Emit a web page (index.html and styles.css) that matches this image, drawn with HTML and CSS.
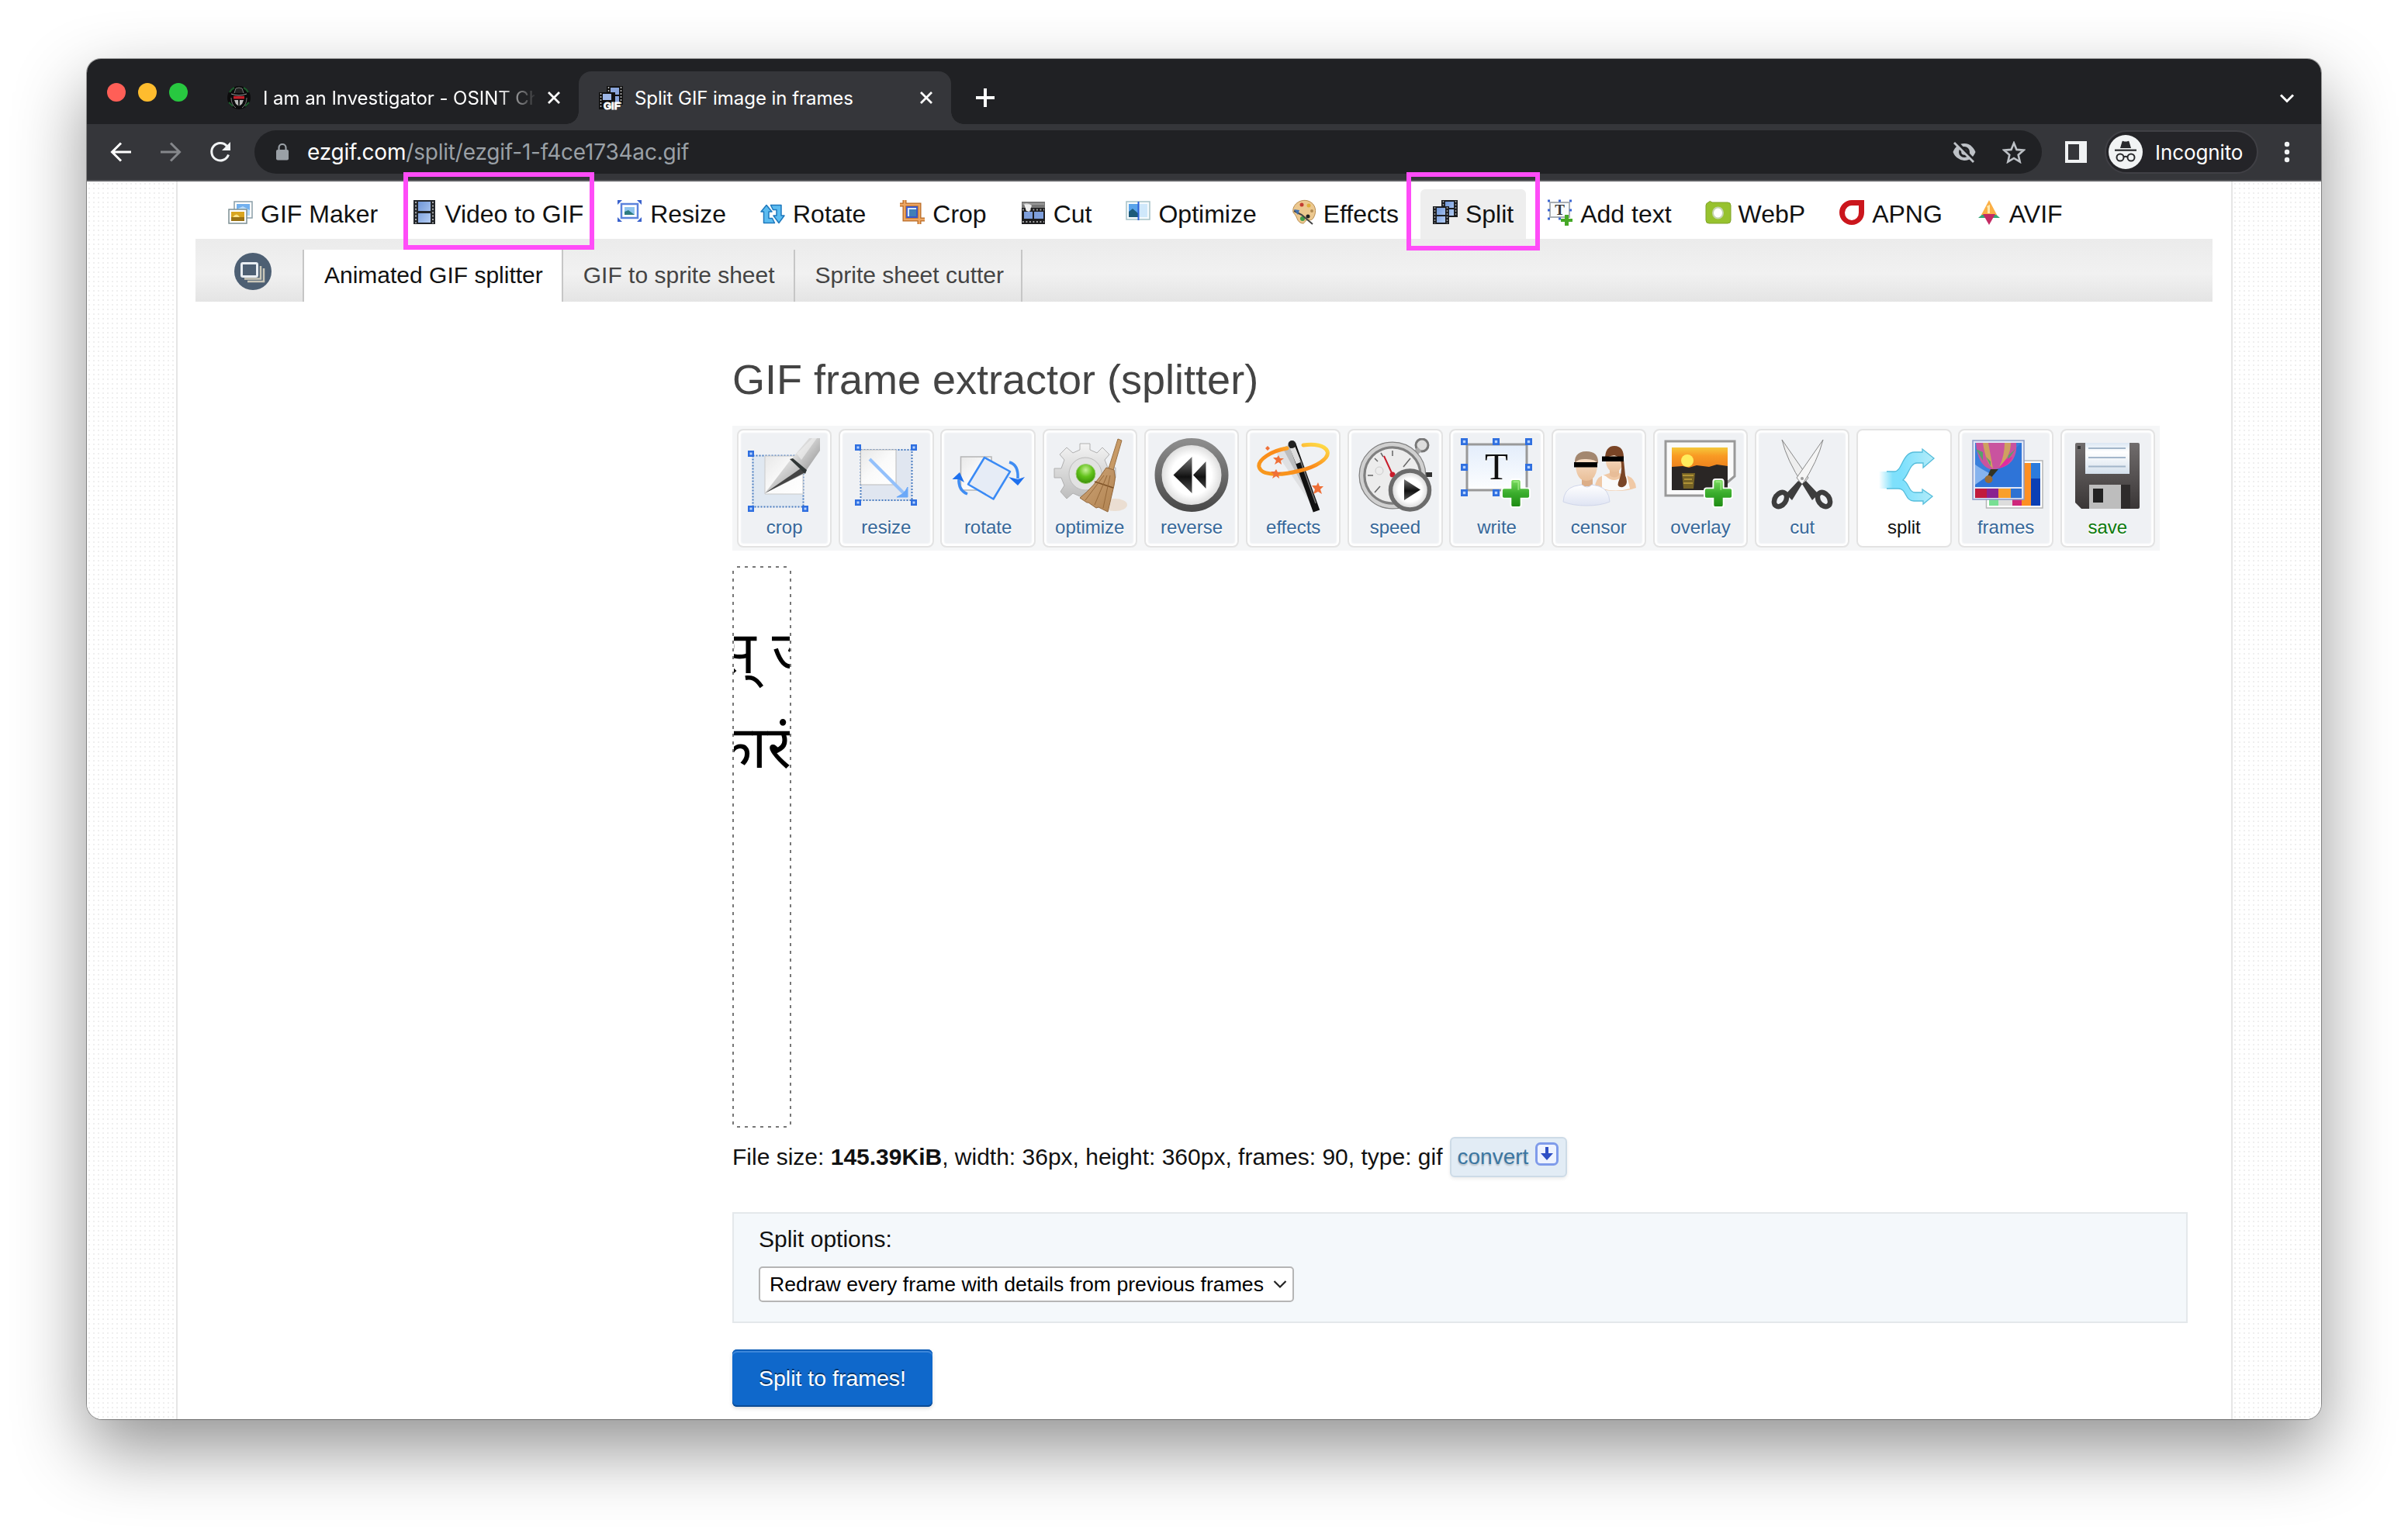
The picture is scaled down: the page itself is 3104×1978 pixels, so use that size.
FILE: index.html
```html
<!DOCTYPE html>
<html lang="en">
<head>
<meta charset="utf-8">
<title>Split GIF image in frames</title>
<link rel="stylesheet" href="styles.css">
</head>
<body>
<svg class="defs" width="0" height="0" aria-hidden="true">
  <defs>
    <linearGradient id="steel" x1="0" y1="0" x2="1" y2="1"><stop offset="0" stop-color="#fff"/><stop offset="1" stop-color="#8f8f8f"/></linearGradient>
    <linearGradient id="paper" x1="0" y1="0" x2="1" y2="1"><stop offset="0" stop-color="#e8e8e8"/><stop offset=".5" stop-color="#fafafa"/><stop offset="1" stop-color="#fff"/></linearGradient>
    <linearGradient id="gear" x1="0" y1="0" x2="0" y2="1"><stop offset="0" stop-color="#f4f4f4"/><stop offset="1" stop-color="#bdbdbd"/></linearGradient>
    <linearGradient id="straw" x1="0" y1="0" x2="1" y2="1"><stop offset="0" stop-color="#cfa67a"/><stop offset="1" stop-color="#b0824f"/></linearGradient>
    <radialGradient id="ball" cx=".5" cy=".3" r=".7"><stop offset="0" stop-color="#c8f29a"/><stop offset=".5" stop-color="#62c21a"/><stop offset="1" stop-color="#3a8f08"/></radialGradient>
    <linearGradient id="ring" x1="0" y1="0" x2="0" y2="1"><stop offset="0" stop-color="#8c8c8c"/><stop offset="1" stop-color="#4a4a4a"/></linearGradient>
    <radialGradient id="dial" cx=".5" cy=".5" r=".5"><stop offset=".6" stop-color="#fff"/><stop offset="1" stop-color="#d2d2d2"/></radialGradient>
    <linearGradient id="ink" x1="0" y1="0" x2="0" y2="1"><stop offset="0" stop-color="#777"/><stop offset=".55" stop-color="#111"/><stop offset="1" stop-color="#555"/></linearGradient>
    <linearGradient id="flame" x1="0" y1="1" x2="1" y2="0"><stop offset="0" stop-color="#f79a1e"/><stop offset=".5" stop-color="#fb8a1a"/><stop offset="1" stop-color="#ffe14a"/></linearGradient>
    <linearGradient id="plus" x1="0" y1="0" x2="0" y2="1"><stop offset="0" stop-color="#7ede62"/><stop offset=".5" stop-color="#3aad2c"/><stop offset="1" stop-color="#1d8a12"/></linearGradient>
    <linearGradient id="sky" x1="0" y1="0" x2="0" y2="1"><stop offset="0" stop-color="#e3edfb"/><stop offset="1" stop-color="#fdfeff"/></linearGradient>
    <linearGradient id="sunset" x1="0" y1="0" x2="0" y2="1"><stop offset="0" stop-color="#f5c83a"/><stop offset=".35" stop-color="#f99a24"/><stop offset="1" stop-color="#e8791b"/></linearGradient>
    <linearGradient id="cyan" x1="0" y1="0" x2="1" y2="0"><stop offset="0" stop-color="#7fe0fb" stop-opacity="0"/><stop offset=".25" stop-color="#7fe0fb"/><stop offset=".4" stop-color="#7ce0fd"/><stop offset="1" stop-color="#b4ecf9"/></linearGradient>
    <linearGradient id="disk" x1="0" y1="0" x2="0" y2="1"><stop offset="0" stop-color="#716d6d"/><stop offset="1" stop-color="#3a3636"/></linearGradient>
    <linearGradient id="label" x1="0" y1="0" x2="0" y2="1"><stop offset="0" stop-color="#dbe7f3"/><stop offset=".3" stop-color="#fff"/><stop offset="1" stop-color="#d4e0ec"/></linearGradient>
    <linearGradient id="skin" x1="0" y1="0" x2="0" y2="1"><stop offset="0" stop-color="#fbe6d2"/><stop offset="1" stop-color="#e9bf99"/></linearGradient>
    <linearGradient id="shirt" x1="0" y1="0" x2="0" y2="1"><stop offset="0" stop-color="#fff"/><stop offset="1" stop-color="#dfe4f3"/></linearGradient>
    <linearGradient id="film" x1="0" y1="0" x2="1" y2="1"><stop offset="0" stop-color="#6f96d8"/><stop offset="1" stop-color="#b4cdf4"/></linearGradient>
    <symbol id="handle" viewBox="0 0 8 8"><path d="M0 0h8v8H0z" fill="#2f6fe0"/><path d="M2.500 2.500h3v3h-3z" fill="#b8d4ff"/></symbol>
    <symbol id="add" viewBox="0 0 40 40"><path d="M13 4q0-3 3-3h8q3 0 3 3v9h9q3 0 3 3v8q0 3-3 3h-9v9q0 3-3 3h-8q-3 0-3-3v-9H4q-3 0-3-3v-8q0-3 3-3h9z" fill="url(#plus)" stroke="#fff" stroke-width="2"/><path d="M16.500 4.500h7v11" fill="none" stroke="#a8f08e" stroke-width="2" opacity=".7"/></symbol>
  </defs>
</svg>

<main class="window">
  <header class="tabstrip">
    <div class="lights"><i class="light red"></i><i class="light amber"></i><i class="light green"></i></div>
    <div class="tab">
      <svg class="fav" viewBox="0 0 32 32"><circle cx="16" cy="16" r="15" fill="#0b0b0c"/><path d="M4 9a14 14 0 0 1 6-6M28 9a14 14 0 0 0-6-6M3 22l5 5M29 22l-5 5" stroke="#1c5c2c" stroke-width="2" fill="none"/><path d="M10 10l2-6q4-2 8 0l2 6" fill="#222" stroke="#777"/><path d="M6 11q10 4 20 0" stroke="#999" fill="none"/><path d="M9 14h14v3.500H9z" fill="#c01f2a"/><path d="M10 19h5l1 8-4-3zM22 19h-5l-1 8 4-3z" fill="#bbb"/><path d="M16 19v9" stroke="#111" stroke-width="1.500"/><path d="M6 16q0 9 6 13M26 16q0 9-6 13" stroke="#777" fill="none"/></svg>
      <span class="tab-title fade">I am an Investigator - OSINT Challenge</span>
      <svg class="close" viewBox="0 0 18 18"><path d="M2 2l14 14M16 2L2 16" stroke="#fff" stroke-width="2.800"/></svg>
    </div>
    <div class="tab active">
      <svg class="fav" viewBox="0 0 32 32"><path d="M10 1h21v24H10z" fill="#111"/><path d="M15 3h11v9H15zM15 14h11v9H15z" fill="#8aa5da"/><path d="M12.500 2v22M28.500 2v22" stroke="#bbb" stroke-width="1.500" stroke-dasharray="2 2"/><path d="M0 9h21v22H0z" fill="#111"/><path d="M5 11h11v8H5z" fill="#9db6e6"/><path d="M2.500 10v20" stroke="#bbb" stroke-width="1.500" stroke-dasharray="2 2"/><text x="6" y="30.500" font-family="Liberation Sans" font-weight="700" font-size="13" fill="#fff" stroke="#fff">GIF</text></svg>
      <span class="tab-title">Split GIF image in frames</span>
      <svg class="close" viewBox="0 0 18 18"><path d="M2 2l14 14M16 2L2 16" stroke="#fff" stroke-width="2.800"/></svg>
    </div>
    <svg class="newtab" viewBox="0 0 24 24"><path d="M12 0v24M0 12h24" stroke="#fff" stroke-width="4"/></svg>
    <svg class="chevron" viewBox="0 0 18 12"><path d="M1 1.500l8 8 8-8" fill="none" stroke="#fff" stroke-width="3"/></svg>
  </header>

  <nav class="toolbar">
    <svg class="tb back" viewBox="0 0 28 28"><path d="M27 14H3M14 2.500L2.500 14 14 25.500" fill="none" stroke="#fff" stroke-width="3"/></svg>
    <svg class="tb fwd" viewBox="0 0 28 28"><path d="M1 14h24M14 2.500L25.500 14 14 25.500" fill="none" stroke="#85878b" stroke-width="3"/></svg>
    <svg class="tb reload" viewBox="0 0 28 28"><path d="M24.500 17.500A11.200 11.200 0 1 1 22.500 6.500" fill="none" stroke="#f1f3f4" stroke-width="3"/><path d="M27 1v11H16z" fill="#f1f3f4"/></svg>
    <div class="omnibox">
      <svg class="lock" viewBox="0 0 18 22"><rect x="1" y="8" width="16" height="13.500" rx="2" fill="#9aa0a6"/><path d="M4.500 9V5.500a4.500 4.500 0 0 1 9 0V9" fill="none" stroke="#9aa0a6" stroke-width="2.200"/></svg>
      <span class="url"><b>ezgif.com</b>/split/ezgif-1-f4ce1734ac.gif</span>
      <svg class="eye" viewBox="0 0 32 28"><path d="M16 3C9 3 4 7.500 1.500 14c1.200 3 3 5.500 5.500 7.500A16 16 0 0 0 16 25c7 0 12-4.500 14.500-11C28 7.500 23 3 16 3z" fill="#bdc1c6"/><circle cx="16" cy="14" r="7" fill="#202124"/><circle cx="16" cy="14" r="3.800" fill="#bdc1c6"/><path d="M5 0l24 25" stroke="#202124" stroke-width="4"/><path d="M3 2l25 25" stroke="#bdc1c6" stroke-width="2.800"/></svg>
      <svg class="star" viewBox="0 0 30 29"><path d="M15 2.500l3.500 8.400 9 .8-6.800 6 2 8.900L15 21.900l-7.700 4.700 2-8.900-6.800-6 9-.8z" fill="none" stroke="#bdc1c6" stroke-width="2.600"/></svg>
    </div>
    <svg class="panel" viewBox="0 0 28 28"><path d="M0 0h28v28H0zM4 4v20h14V4z" fill="#f1f3f4" fill-rule="evenodd"/></svg>
    <div class="profile">
      <svg viewBox="0 0 44 44"><circle cx="22" cy="22" r="22" fill="#f1f3f4"/><path d="M15 17l2.500-8.500q.5-1 1.500-.5 3 1 6 0 1-.5 1.500.5L29 17z" fill="#28292c"/><path d="M8 19.700h28" stroke="#28292c" stroke-width="2.200"/><circle cx="15" cy="29" r="4.500" fill="none" stroke="#28292c" stroke-width="2"/><circle cx="29" cy="29" r="4.500" fill="none" stroke="#28292c" stroke-width="2"/><path d="M19.500 28.500q2.500-1.500 5 0" fill="none" stroke="#28292c" stroke-width="2"/></svg>
      <span>Incognito</span>
    </div>
    <svg class="kebab" viewBox="0 0 8 28"><circle cx="4" cy="4" r="3.200" fill="#f1f3f4"/><circle cx="4" cy="14" r="3.200" fill="#f1f3f4"/><circle cx="4" cy="24" r="3.200" fill="#f1f3f4"/></svg>
  </nav>

  <div class="page">
    <div class="container">
      <nav class="menu">
        <a><svg viewBox="0 0 32 32"><path d="M8 2h23v21H8z" fill="#fff" stroke="#8a9fa8" stroke-width="1.500"/><path d="M11 5h17v15H11z" fill="#72b0ee"/><path d="M11 12l8-4 9 5v7H11z" fill="#b8dcfa"/><path d="M1 12h23v18H1z" fill="#fff" stroke="#7c8f92" stroke-width="1.500"/><path d="M4 15h17v12H4z" fill="#d9a520"/><path d="M4 22h17v5H4z" fill="#9a7216"/><path d="M6 22q5-7 9 0z" fill="#fbe48a"/></svg>GIF Maker</a>
        <a><svg viewBox="0 0 32 32"><path d="M2 0h28v31H2z" fill="#23262b"/><path d="M8 2h16v12H8zM8 17h16v12H8z" fill="url(#film)"/><path d="M5 2v28M27 2v28" stroke="#a8a8a8" stroke-width="2" stroke-dasharray="2 2.400"/></svg>Video to GIF</a>
        <a><svg viewBox="0 0 32 32"><path d="M5 5h21v18H5z" fill="#fff" stroke="#5b82dc" stroke-width="2.500"/><path d="M9 9h13v10H9z" fill="#8fc4ee"/><path d="M9 15l5-2 8 6H9z" fill="#2d7b80"/><path d="M0 0h6L0 6zM31 0h-6l6 6zM0 28h6l-6-6zM31 28h-6l6-6z" fill="#3a62cc"/></svg>Resize</a>
        <a><svg viewBox="0 0 32 32"><path d="M4.500 29.500V15H1l7-8.500L15 15h-4v8.500h4.500l3 6z" fill="#5cbcf0" stroke="#1d78bd" stroke-width="1.500" stroke-linejoin="round"/><path d="M13.500 6.500H27V20h4l-7 9.500L17 20h4v-7.500h-4.500z" fill="#5cbcf0" stroke="#1d78bd" stroke-width="1.500" stroke-linejoin="round"/></svg>Rotate</a>
        <a><svg viewBox="0 0 32 32"><path d="M9 9h15v15H9z" fill="#d8e8fc"/><path d="M12 12h11v9H12z" fill="#3f7fb8"/><path d="M6 0v25h26M0 6h25v25" fill="none" stroke="#b86a24" stroke-width="5"/><path d="M6 0v25h26M0 6h25v25" fill="none" stroke="#eca562" stroke-width="2.500"/><path d="M9 9h13v13H9z" fill="none" stroke="#3a57c8" stroke-width="1.800"/></svg>Crop</a>
        <a><svg viewBox="0 0 32 32"><path d="M1 2h30v8H1z" fill="#777"/><path d="M1 10h30v21H1z" fill="#1d1d1f"/><path d="M4 15h11v9H4zM17 15h12v9H17z" fill="#7e9fdc"/><path d="M2 12.500h28M2 28h28" stroke="#aaa" stroke-width="1.800" stroke-dasharray="1.800 2.700"/><path d="M4 5q5-2 10 2l-3 8-4-1z" fill="#eee"/><path d="M2 5h28" stroke="#bbb"/></svg>Cut</a>
        <a><svg viewBox="0 0 32 32"><path d="M1 2h30v23H1z" fill="#f6fbfd" stroke="#a6c2c8" stroke-width="1.500"/><path d="M4 5h12v17H4z" fill="#5aa4ea"/><path d="M4 15l5-4 7 6v5H4z" fill="#1b5a7a"/><path d="M17 5h11v17H17z" fill="#cfe8fb"/><path d="M16.500 2v24" stroke="#2a5fd8" stroke-width="2"/></svg>Optimize</a>
        <a><svg viewBox="0 0 32 32"><path d="M3 16C1 6 12-2 22 1s12 14 7 22c-3 5-6 1-9 3s-2 6-8 3C7 26 9 22 3 16z" fill="#ecc88f" stroke="#b88c50"/><circle cx="14" cy="6" r="2.500" fill="#c43b30"/><circle cx="23" cy="7" r="2.500" fill="#dfae3b"/><circle cx="27" cy="14" r="2" fill="#b08850"/><circle cx="22" cy="21" r="2.500" fill="#222"/><circle cx="15" cy="24" r="3" fill="#3f9d4b"/><path d="M4 14l10 5 14 12" stroke="#444" stroke-width="2" fill="none"/><path d="M4 12l7 1-2 6z" fill="#3f6fae"/></svg>Effects</a>
        <a class="current"><svg viewBox="0 0 32 32"><path d="M11 0h21v22H11z" fill="#1c1e22"/><path d="M16 2h11v8H16zM16 12h11v8H16z" fill="url(#film)"/><path d="M13.500 1v20M29.500 1v20" stroke="#999" stroke-width="1.500" stroke-dasharray="2 2"/><path d="M0 8h21v23H0z" fill="#1c1e22"/><path d="M5 10h11v9H5zM5 21h11v8H5z" fill="url(#film)"/><path d="M2.500 9v21M18.500 9v21" stroke="#999" stroke-width="1.500" stroke-dasharray="2 2"/></svg>Split</a>
        <a><svg viewBox="0 0 32 32"><path d="M3 3h25v19H3z" fill="#f8fafc" stroke="#a9afb5" stroke-width="2"/><text x="15.500" y="19" text-anchor="middle" font-family="Liberation Serif" font-weight="700" font-size="19" fill="#333">T</text><path d="M0 1h3M14 1h3M28 1h3M0 13h3M28 13h3M0 24h3M14 24h3" stroke="#3c66d2" stroke-width="3"/><path d="M22 19h5v5h5v4h-5v5h-5v-5h-5v-4h5z" fill="#46a827"/></svg>Add text</a>
        <a><svg viewBox="0 0 32 32"><path d="M3 3q2-3 5 0h20q4 0 4 4v19q0 4-4 4H4q-4 0-4-4V7q0-3 3-4z" fill="#97c22e" stroke="#7fa32a"/><ellipse cx="15.500" cy="16.500" rx="6.500" ry="7" fill="#fff" stroke="#c4d4b0" stroke-width="2"/></svg>WebP</a>
        <a><svg viewBox="0 0 32 32"><path d="M16 0h16v16a16 16 0 1 1-16-16zM17 7a9 9.500 0 1 0 8 9V7z" fill="#cb161d" fill-rule="evenodd"/></svg>APNG</a>
        <a><svg viewBox="0 0 32 32"><path d="M2 23l8-7h12l8 7z" fill="#35a878"/><path d="M16 0l10 19H6z" fill="#fbaf45"/><path d="M13 8l4-2v11h-3v-7z" fill="#fde9b0"/><path d="M8 18h16l-8 14z" fill="#c42a63"/></svg>AVIF</a>
      </nav>
      <div class="subnav">
        <div class="badge"><svg viewBox="0 0 48 48"><circle cx="24" cy="24" r="24" fill="#4d5f73"/><path d="M17 37h21V20" fill="none" stroke="#c9c6b8" stroke-width="2.500"/><path d="M13 33.500h21V17" fill="none" stroke="#c9c6b8" stroke-width="2.500"/><rect x="9.500" y="13.500" width="20" height="17" rx="1.500" fill="#4d5f73" stroke="#e8edf2" stroke-width="3"/></svg></div>
        <a class="on">Animated GIF splitter</a><a>GIF to sprite sheet</a><a class="last">Sprite sheet cutter</a>
      </div>

      <section class="content">
        <h1>GIF frame extractor (splitter)</h1>
        <div class="tools">
          <a><svg viewBox="0 0 96 96"><path d="M7.500 22.500h65v66h-65z" fill="#e0e8f1" stroke="#4a7cc0" stroke-width="2" stroke-dasharray="2 2"/><path d="M23 23h49v49H23z" fill="url(#paper)" stroke="#c9c9c9"/><use href="#handle" x="1" y="16" width="8" height="8"/><use href="#handle" x="1" y="87" width="8" height="8"/><use href="#handle" x="71" y="87" width="8" height="8"/><path d="M23 71L56 28l19 17z" fill="url(#steel)"/><path d="M23 71l52-27-6-5z" fill="#444"/><path d="M58 26L80 0h14v16L76 42z" fill="url(#steel)"/><path d="M64 20L84 0h6L70 28z" fill="#eee" opacity=".7"/><path d="M55 27l4-1 18 15-2 5z" fill="#2f3535"/></svg>crop</a>
          <a><svg viewBox="0 0 96 96"><path d="M15.500 15h66v65h-66z" fill="#e0e6f0" stroke="#4a7cc0" stroke-width="2" stroke-dasharray="2 2"/><path d="M15.500 15H61v45H15.500z" fill="url(#paper)" stroke="#bbb"/><path d="M27 27l44 44" stroke="#93c0fb" stroke-width="4"/><path d="M76 63v13H62l7-4 4-4z" fill="#6ba8f8" stroke="#6ba8f8"/><use href="#handle" x="8" y="8" width="8" height="8"/><use href="#handle" x="80" y="8" width="8" height="8"/><use href="#handle" x="8" y="79" width="8" height="8"/><use href="#handle" x="80" y="79" width="8" height="8"/></svg>resize</a>
          <a><svg viewBox="0 0 96 96"><path d="M12.500 24H52v43H12.500z" fill="url(#paper)" stroke="#b5b5b5" stroke-width="1.500"/><path d="M43 25l33 18-21.500 35.500L22 59.500z" fill="#e6ecf6" stroke="#3a8af5" stroke-width="2.500" stroke-linejoin="round"/><path d="M75 31q12 3 11 21" fill="none" stroke="#3f8cf2" stroke-width="3.500"/><path d="M74 50l12 3 9-3-9 11z" fill="#1e70ee"/><path d="M21 72Q9 67 10 52" fill="none" stroke="#3f8cf2" stroke-width="3.500"/><path d="M1.500 53L11 44l6 13-7-4z" fill="#1e70ee"/></svg>rotate</a>
          <a><svg viewBox="0 0 96 96"><ellipse cx="80" cy="86" rx="16" ry="8" fill="#e8d2bb" opacity=".6"/><path d="M35 15V7h13v8l9 4 7-7 9 9-6 7 4 10h10v13H71l-4 10 6 7-9 9-7-6-9 4H35l-9-4-8 7-8-9 5-8-4-10H2V39h9l4-11-6-7 9-9 8 7z" fill="url(#gear)" stroke="#b0b0b0"/><circle cx="42" cy="46" r="21" fill="#e2e2e2" stroke="#bbb"/><circle cx="42.500" cy="46" r="12.500" fill="url(#ball)" stroke="#9acb70"/><path d="M84 1l5 2-11 38-6-2z" fill="#c79a66" stroke="#9a7043"/><path d="M69 38l10 3q3 10 0 20l-8 34-12-6-3 1-10-7-2 0-9-6q18-14 34-39z" fill="url(#straw)" stroke="#93683c"/><path d="M54 56l24 8" stroke="#7d5126" stroke-width="1.500"/><path d="M66 48L42 80M70 48L54 86M74 48l-9 42" stroke="#96693a" fill="none"/></svg>optimize</a>
          <a><svg viewBox="0 0 96 96"><circle cx="48" cy="47.500" r="43" fill="url(#dial)" stroke="url(#ring)" stroke-width="9"/><path d="M24.500 47.500L48.500 24v47zM50 47.500L66.500 30v35z" fill="url(#ink)"/></svg>reverse</a>
          <a><svg viewBox="0 0 96 96"><path d="M45 8L24 16l48 70z" fill="#ccc" opacity=".45"/><path d="M45 8L34 12l42 78z" fill="#999" opacity=".5"/><path d="M47 8l31 86" stroke="#111" stroke-width="9"/><path d="M47 12l8 20" stroke="#ddd" stroke-width="7"/><circle cx="46.500" cy="8" r="5" fill="#222"/><path d="M57 28l20 56" stroke="#777" stroke-width="1.500"/><path d="M40 13C20 16 2 28 4 37c3 12 30 11 52 5 22-5 39-16 36-25-3-8-17-10-31-8" fill="none" stroke="url(#flame)" stroke-width="5" stroke-linecap="round"/><path d="M29 22l2 4 5 0-4 3 1 5-4-3-5 3 2-5-4-4h5zM26 40l2 4 5 0-4 3 1 5-4-3-5 3 2-5-4-4h5zM80 57l2 5 5 0-4 4 2 6-5-3-6 3 2-6-4-5h6zM15 10l3 3-3 3-3-3z" fill="#ef7038"/></svg>effects</a>
          <a><svg viewBox="0 0 96 96"><circle cx="83" cy="9" r="8" fill="#ddd" stroke="#777" stroke-width="3"/><path d="M74 20l6-6" stroke="#aaa" stroke-width="7"/><path d="M88 47h8" stroke="#333" stroke-width="6"/><circle cx="45" cy="48" r="39" fill="#ececec" stroke="#808080" stroke-width="9"/><circle cx="45" cy="48" r="40" fill="none" stroke="#d0d0d0" stroke-width="4.500"/><path d="M45 16v7M45 80v-7M13 48h7M22 26l4 4M68 26l-9 11M22 70l7-8M30 19l3 5" stroke="#666" stroke-width="1.500"/><circle cx="28" cy="42" r="5" fill="none" stroke="#ccc"/><path d="M34 23l11 24" stroke="#c91c2b" stroke-width="2"/><circle cx="45" cy="47" r="3.500" fill="#c91c2b"/><circle cx="67.500" cy="67" r="25" fill="url(#dial)" stroke="#6c6c6c" stroke-width="5.500"/><path d="M60 53l21 13.500L60 80z" fill="url(#ink)"/></svg>speed</a>
          <a><svg viewBox="0 0 96 96"><path d="M9 8h77v59H9z" fill="url(#sky)" stroke="#999" stroke-width="3"/><text x="47" y="53" text-anchor="middle" font-family="Liberation Serif" font-size="49" fill="#111">T</text><g><use href="#handle" x="1" y="0" width="9" height="9"/><use href="#handle" x="42" y="0" width="9" height="9"/><use href="#handle" x="84" y="0" width="9" height="9"/><use href="#handle" x="1" y="33" width="9" height="9"/><use href="#handle" x="84" y="33" width="9" height="9"/><use href="#handle" x="1" y="66" width="9" height="9"/><use href="#handle" x="42" y="66" width="9" height="9"/></g><use href="#add" x="53" y="52" width="38" height="38"/></svg>write</a>
          <a><svg viewBox="0 0 96 96"><path d="M43 64q0-12 10-16l9-3h12l10 3q11 4 12 16-10 4-25 4-16 0-28-4z" fill="#f0c9a6"/><path d="M52 47l5 2q10 10 22 0l5-2 4 18q-18 5-36 0z" fill="#fafafa"/><path d="M62 38h12v10q-6 5-12 0z" fill="#e8bd98"/><ellipse cx="68" cy="29" rx="11" ry="15" fill="url(#skin)"/><path d="M56 27q0-17 12-17 13 0 12 18l2 20q5 12-3 15-8 1-6-6 5-12 4-24-1-9-9-11-8 1-12 5z" fill="#7a4526"/><path d="M52 23.500h28v6.500H52z"/><path d="M26 50h14v12H26z" fill="#dcae88"/><path d="M18 33q0-14 14-14t14 14q0 14-7 20-7 4-14 0-7-6-7-20z" fill="url(#skin)"/><path d="M17 33q-1-16 15-16 16 0 15 16-3-6-15-6-12-1-15 6z" fill="#a3876f"/><path d="M16 31h30v6.500H16z"/><path d="M2 82q1-16 14-20l10-2q7 6 13 0l9 2q13 4 14 20-12 5-30 5T2 82z" fill="url(#shirt)" stroke="#d0d6ea"/></svg>censor</a>
          <a><svg viewBox="0 0 96 96"><path d="M3 4h89v45L78 61v13H3z" fill="#fafafa" stroke="#999" stroke-width="3"/><path d="M11 12h72v31H11z" fill="url(#sunset)"/><circle cx="31" cy="29" r="8" fill="#ffec5c"/><path d="M11 37l14-1 8 2 10-3 16 2 10-3 14 2v31H11z" fill="#2a2625"/><path d="M24 45h17l-2 20H26z" fill="#8f7726" opacity=".75"/><path d="M25 48h14M27 53h10M26 58h12" stroke="#c4a43c" stroke-width="1.500"/><use href="#add" x="52" y="52" width="38" height="38"/></svg>overlay</a>
          <a><svg viewBox="0 0 96 96"><path d="M22 2l34 49-7 9Q28 28 22 2z" fill="#eee" stroke="#888"/><path d="M75 2L41 51l7 9Q68 30 75 2z" fill="#f5f5f5" stroke="#888"/><path d="M43 55l5 4-13 21-8-8zM53 55l-5 4 13 21 8-8z" fill="#3d3d3d"/><ellipse cx="20" cy="79" rx="7" ry="10" transform="rotate(35 20 79)" fill="none" stroke="#3d3d3d" stroke-width="6.500"/><ellipse cx="76" cy="79" rx="7" ry="10" transform="rotate(-35 76 79)" fill="none" stroke="#3d3d3d" stroke-width="6.500"/><circle cx="48" cy="52" r="2" fill="#999"/></svg>cut</a>
          <a class="on"><svg viewBox="0 0 96 96"><path d="M16 43h20C46 43 46 18 62 18h10v-4l15 12-14 12v-6h-8c-9 0-11 16-18 22 8 3 7 16 16 16h9v-4l13 9-12 10v-4H61C49 81 52 65 41 65H16z" fill="url(#cyan)"/><path d="M26 43h10C46 43 46 18 62 18h10v-4l15 12-14 12v-6h-8c-9 0-11 16-18 22 8 3 7 16 16 16h9v-4l13 9-12 10v-4H61C49 81 52 65 41 65H26" fill="none" stroke="#55bddb" stroke-width="1.300"/></svg>split</a>
          <a><svg viewBox="0 0 96 96"><path d="M22.500 29H95v61H22.500z" fill="#fff" stroke="#b5b5b5" stroke-width="1.500"/><path d="M26 32h12v55H26z" fill="#78df93"/><path d="M38 32h18v55H38z" fill="#ddd"/><path d="M56 32h12v55H56z" fill="#cf267b"/><path d="M68 32h12v55H68z" fill="#fd8f23"/><path d="M80 32h12v55H80z" fill="#0b3fb4"/><path d="M80 32h12v20H80z" fill="#2c7bdc"/><path d="M5 3h66v76H5z" fill="#dfe6f7" stroke="#8b9cc8" stroke-width="1.500"/><path d="M8 6h60v57H8z" fill="#3a80dc"/><path d="M8 58l30-26 30-26v57H8z" fill="#2e74d8"/><path d="M8 34q8 6 20 12L8 60z" fill="#86b3ee"/><path d="M9 6h52q2 20-12 29-10 6-22 5Q11 34 9 6z" fill="#c9539f"/><path d="M18 6h7l6 33q-9-6-13-33zM46 6h8q0 18-15 31 7-14 7-31z" fill="#cfa060"/><path d="M9 14l9 4v11zM60 14l-9 8-2 8zM22 24l6 6v6z" fill="#56a36a"/><path d="M56 24q-4 12-18 15l10-12z" fill="#e02da0"/><path d="M28 40h10L26 54h-4z" fill="#332"/><circle cx="25.500" cy="53" r="5" fill="#9a6b33"/><path d="M8 65h15v12H8z" fill="#c11a3c"/><path d="M23 65h15v12H23z" fill="#8a2390"/><path d="M38 65h16v12H38z" fill="#f99f2b"/><path d="M54 65h14v12H54z" fill="#2d72d2"/></svg>frames</a>
          <a class="save"><svg viewBox="0 0 96 96"><path d="M6 8q0-2 2-2h79q2 0 2 2v81q0 2-2 2H14l-8-8z" fill="url(#disk)"/><path d="M19 6h57v40H19z" fill="url(#label)"/><path d="M23 13h48M23 25h48M23 36.500h48" stroke="#a3b6ca" stroke-width="2"/><path d="M24 60h41v31H24z" fill="#bdbdbd"/><path d="M65 60h12v31H65z" fill="#2e2b2b"/><path d="M29 65h13v18H29z" fill="#222"/><path d="M9 10h4v4H9z" fill="#333"/></svg>save</a>
        </div>

        <div class="preview">
          <p class="line-a">न्स् ज</p>
          <p class="line-b">कारं</p>
        </div>

        <p class="info"><span>File size: <strong>145.39KiB</strong>, width: 36px, height: 360px, frames: 90, type: gif</span>
          <a class="convert">convert<svg viewBox="0 0 30 30"><rect x="1.500" y="1.500" width="27" height="27" rx="5" fill="#eef3ff" stroke="#7f9bea" stroke-width="3"/><path d="M13 6h4v8h6l-8 9-8-9h6z" fill="#2f4fc4"/></svg></a></p>

        <div class="options">
          <label>Split options:</label>
          <div class="select">Redraw every frame with details from previous frames<svg viewBox="0 0 18 12"><path d="M1.500 2l7.500 7.500L16.500 2" fill="none" stroke="#222" stroke-width="2.200"/></svg></div>
        </div>
        <button class="go">Split to frames!</button>
      </section>
    </div>
  </div>
  <div class="mark mark-video"></div>
  <div class="mark mark-split"></div>
</main>
</body>
</html>
```
FILE: styles.css
```css
* { box-sizing: border-box; }
html { height: 1978px; overflow: hidden; }
body {
  margin: 0;
  height: 1978px;
  padding: 76px 112px;
  background: #fff;
  font-family: "Liberation Sans", Arial, sans-serif;
  color: #111;
}
.defs { position: absolute; }
svg { display: block; flex: none; }
p, h1 { margin: 0; }

.window {
  position: relative;
  width: 2880px;
  height: 1754px;
  border-radius: 18px 18px 20px 20px;
  box-shadow: 0 0 0 1px rgba(0,0,0,.35), 0 38px 92px rgba(0,0,0,.43);
  display: flex;
  flex-direction: column;
}

.tabstrip {
  height: 84px;
  padding: 16px 35px 0 26px;
  background: #202124;
  border-radius: 18px 18px 0 0;
  display: flex;
  font-family: Inter, Roboto, sans-serif;
  font-size: 24px;
  color: #fff;
}
.lights { display: flex; gap: 16px; padding-top: 15px; width: 128px; }
.light { width: 24px; height: 24px; border-radius: 50%; }
.red { background: #ff5f57; }
.amber { background: #febc2e; }
.green { background: #28c840; }
.tab {
  position: relative;
  width: 480px;
  height: 68px;
  padding: 0 23px 0 26px;
  display: flex;
  align-items: center;
}
.tab.active { background: #35363a; border-radius: 16px 16px 0 0; }
.tab.active::before, .tab.active::after {
  content: "";
  position: absolute;
  bottom: 0;
  width: 16px;
  height: 16px;
}
.tab.active::before { left: -16px; background: radial-gradient(circle at 0 0, transparent 15.500px, #35363a 16px); }
.tab.active::after { right: -16px; background: radial-gradient(circle at 100% 0, transparent 15.500px, #35363a 16px); }
.fav { width: 32px; height: 32px; }
.tab-title { margin-left: 15px; width: 350px; letter-spacing: -.05px; white-space: nowrap; overflow: hidden; }
.active .tab-title { margin-left: 14px; }
.fade { -webkit-mask-image: linear-gradient(90deg, #000 300px, transparent 355px); mask-image: linear-gradient(90deg, #000 300px, transparent 355px); }
.close { width: 18px; height: 18px; margin-left: auto; }
.newtab { width: 24px; height: 24px; margin: 22px 0 0 32px; }
.chevron { width: 18px; height: 12px; margin: 29px 0 0 auto; }

.toolbar {
  height: 74px;
  padding: 0 40px 0 30px;
  background: #35363a;
  border-bottom: 2px solid #5b5c60;
  display: flex;
  align-items: center;
  font-family: Inter, Roboto, sans-serif;
}
.tb { width: 28px; height: 28px; }
.fwd { margin-left: 36px; }
.reload { margin-left: 36px; }
.omnibox {
  width: 2304px;
  height: 56px;
  margin-left: 30px;
  padding: 0 21px 0 27px;
  border-radius: 28px;
  background: #202124;
  display: flex;
  align-items: center;
}
.lock { width: 18px; height: 22px; }
.url { margin-left: 23px; font-size: 28px; letter-spacing: -.2px; color: #9aa0a6; }
.url b { font-weight: 400; color: #fff; }
.eye { width: 32px; height: 28px; margin-left: auto; }
.star { width: 30px; height: 29px; margin-left: 33px; }
.panel { width: 28px; height: 28px; margin-left: 30px; }
.profile {
  width: 198px;
  height: 56px;
  margin-left: 23px;
  border: 2px solid #404045;
  border-radius: 28px;
  background: #242428;
  padding-left: 3px;
  display: flex;
  align-items: center;
  font-size: 26px;
  color: #fff;
}
.profile svg { width: 44px; height: 44px; }
.profile span { margin-left: 16px; letter-spacing: -.1px; }
.kebab { width: 8px; height: 28px; margin-left: auto; }

.page {
  flex: 1;
  border-radius: 0 0 20px 20px;
  overflow: hidden;
  background: radial-gradient(circle at 3px 3px, #efefef 1.200px, transparent 1.500px) 0 0 / 6px 6px #fff;
}
.container {
  width: 2651px;
  height: 100%;
  margin-left: 115px;
  padding: 10px 23px 0;
  background: #fff;
  border: solid #e6e6e6;
  border-width: 0 2px;
}
.menu { display: flex; gap: 12px; padding-left: 26px; font-size: 32px; }
.menu a {
  height: 64px;
  padding: 0 16px;
  border-radius: 6px 6px 0 0;
  display: flex;
  align-items: center;
  gap: 10px;
  white-space: nowrap;
}
.menu svg { width: 32px; height: 32px; margin-bottom: 4px; overflow: visible; }
.menu .current { background: #eee; }

.subnav {
  width: 2600px;
  height: 81px;
  padding-top: 14px;
  background: linear-gradient(#ebebeb, #f1f1f1 55%, #e4e4e4);
  display: flex;
  font-size: 30px;
  color: #444;
}
.badge { width: 138px; padding: 4px 0 0 50px; }
.badge svg { width: 48px; height: 48px; }
.subnav a {
  height: 67px;
  padding: 0 24px 0 26px;
  line-height: 65px;
  border-left: 2px solid #c6c6c6;
  white-space: nowrap;
}
.subnav .on { background: #fff; color: #111; }
.subnav .last { border-right: 2px solid #c6c6c6; padding-right: 22px; }

.content { padding-left: 692px; display: flex; flex-direction: column; align-items: flex-start; }
h1 { margin-top: 68px; font-size: 54px; line-height: 64px; font-weight: 400; color: #444; }
.tools {
  width: 1840px;
  height: 161px;
  margin-top: 28px;
  padding: 4px 6px;
  background: #f5f6f7;
  display: flex;
  gap: 8.900px;
}
.tools a {
  width: 122.400px;
  height: 153px;
  padding-top: 10px;
  border: 2px solid #e3e3e3;
  border-radius: 8px;
  background: #eff1f4;
  box-shadow: inset 0 0 2px 3px #fff;
  color: #36689a;
  font-size: 24px;
  line-height: 34px;
  text-shadow: 0 2px 0 #fff;
  display: flex;
  flex-direction: column;
  align-items: center;
}
.tools svg { width: 96px; height: 96px; margin-bottom: 2px; }
.tools .on { background: #fff; color: #111; }
.tools .save { color: #0b7a0b; }

.preview {
  width: 76px;
  height: 724px;
  margin-top: 20px;
  padding: 51px 2px 0;
  overflow: hidden;
  font-size: 76px;
  line-height: 122px;
  color: #000;
  white-space: nowrap;
  background:
    repeating-linear-gradient(90deg, #777 0 4px, transparent 4px 10px) 6px 0 / 64px 2px no-repeat,
    repeating-linear-gradient(90deg, #777 0 4px, transparent 4px 10px) 6px 100% / 64px 2px no-repeat,
    repeating-linear-gradient(#777 0 4px, transparent 4px 10px) 0 6px / 2px 714px no-repeat,
    repeating-linear-gradient(#777 0 4px, transparent 4px 10px) 100% 6px / 2px 714px no-repeat;
}
.preview p { overflow: hidden; }
.line-a { text-indent: -47px; }
.line-b { text-indent: -35px; }
.info { height: 52px; margin-top: 12px; font-size: 30px; display: flex; align-items: center; gap: 9px; white-space: nowrap; }
.convert {
  height: 52px;
  padding: 0 9px 0 8px;
  border: 2px solid #cddbe7;
  border-radius: 6px;
  background: #e2ecf5;
  box-shadow: 0 2px 4px rgba(0,0,0,.08);
  color: #3b76a1;
  font-size: 28px;
  text-shadow: 0 2px 2px rgba(0,0,0,.2);
  display: flex;
  align-items: center;
  gap: 9px;
}
.convert svg { width: 30px; height: 30px; margin-bottom: 8px; }
.options {
  width: 1876px;
  height: 143px;
  margin-top: 45px;
  padding: 13px 32px 0;
  border: 2px solid #e4e8eb;
  background: #f4f8fb;
  font-size: 30px;
  display: flex;
  flex-direction: column;
  align-items: flex-start;
}
.options label { line-height: 40px; }
.select {
  width: 690px;
  height: 46px;
  margin-top: 15px;
  padding: 0 7px 0 12px;
  border: 2px solid #b5b5b5;
  border-radius: 5px;
  background: #fff;
  color: #000;
  font-size: 26.670px;
  display: flex;
  align-items: center;
  justify-content: space-between;
  white-space: nowrap;
}
.select svg { width: 18px; height: 12px; }
.go {
  width: 258px;
  height: 74px;
  margin-top: 34px;
  padding: 0;
  border: 0;
  border-radius: 6px;
  background: #0f68cb;
  box-shadow: inset 0 -2px 0 #0a4a94, inset 0 2px 0 #0f5fba, inset 0 4px 0 #3d87da, 0 2px 5px rgba(0,0,0,.15);
  color: #fff;
  font: 28.500px "Liberation Sans", Arial, sans-serif;
  text-shadow: 0 -2px 0 rgba(0,0,0,.5);
}

.mark { position: absolute; border: 6px solid #ff4cf8; }
.mark-video { left: 408px; top: 146px; width: 246px; height: 100px; }
.mark-split { left: 1701px; top: 146px; width: 172px; height: 101px; }
```
